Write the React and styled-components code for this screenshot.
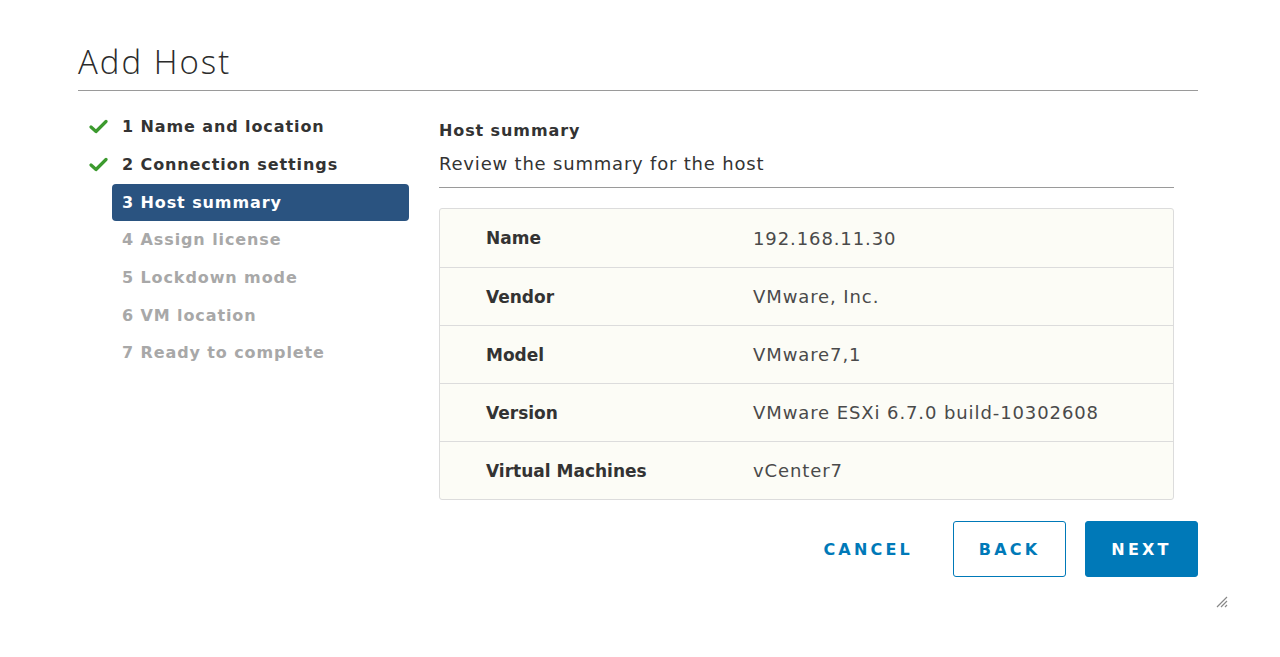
import React from "react";
import styled, { createGlobalStyle } from "styled-components";

const Global = createGlobalStyle`
    html, body {
        margin: 0;
        padding: 0;
        background: #ffffff;
    }
    body {
        font-family: "DejaVu Sans", "Open Sans", sans-serif;
        color: #313131;
    }
`;

const Dialog = styled.div`
    position: relative;
    width: 1280px;
    height: 657px;
    box-sizing: border-box;
    padding: 40px 82px 0 78px;
`;

const Title = styled.h1`
    margin: 0;
    font-family: "Open Sans", sans-serif;
    font-size: 33px;
    font-weight: 300;
    letter-spacing: 2px;
    line-height: 44px;
    color: #2b2b2b;
    padding-bottom: 6px;
    border-bottom: 1px solid #9a9a9a;
`;

const Body = styled.div`
    display: flex;
    margin-top: 17px;
`;

const Steps = styled.ul`
    list-style: none;
    margin: 0;
    padding: 0;
    width: 361px;
    flex-shrink: 0;
`;

const StepRow = styled.li`
    display: flex;
    align-items: center;
    height: 37.7px;
`;

const CheckSlot = styled.span`
    width: 34px;
    display: flex;
    align-items: center;
    padding-left: 11px;
    box-sizing: border-box;
`;

const StepLabel = styled.span`
    width: 297px;
    height: 37px;
    box-sizing: border-box;
    padding-left: 10px;
    display: flex;
    align-items: center;
    border-radius: 4px;
    font-size: 16px;
    font-weight: 700;
    letter-spacing: 0.9px;
    color: ${p => p.state === "active" ? "#ffffff" : p.state === "todo" ? "#a8a8a8" : "#333333"};
    background: ${p => p.state === "active" ? "#2a5380" : "transparent"};
`;

const Main = styled.div`
    flex: 1;
    display: flex;
    flex-direction: column;
    padding-top: 12px;
`;

const Content = styled.div`
    margin-right: 24px;
`;

const Heading = styled.div`
    font-size: 16px;
    font-weight: 700;
    letter-spacing: 0.9px;
    line-height: 22px;
    color: #333;
`;

const Sub = styled.div`
    margin-top: 11px;
    font-size: 18px;
    letter-spacing: 0.8px;
    line-height: 22px;
    color: #333;
    padding-bottom: 12px;
    border-bottom: 1px solid #9a9a9a;
`;

const Table = styled.div`
    margin-top: 20px;
    border: 1px solid #dcdcdc;
    border-radius: 3px;
    background: #fcfcf6;
`;

const Row = styled.div`
    display: grid;
    grid-template-columns: 313px 1fr;
    align-items: center;
    height: 58px;
    border-top: ${p => p.first ? "none" : "1px solid #dcdcdc"};
    box-sizing: border-box;
`;

const Key = styled.span`
    padding-left: 46px;
    font-size: 17px;
    font-weight: 600;
    color: #333;
`;

const Val = styled.span`
    font-size: 18px;
    letter-spacing: 0.9px;
    color: #4a4a4a;
`;

const Actions = styled.div`
    display: flex;
    justify-content: flex-end;
    align-items: center;
    gap: 19px;
    margin-top: 21px;
`;

const Button = styled.button`
    height: 56px;
    min-width: ${p => p.variant === "flat" ? "0" : "113px"};
    padding: 0 ${p => p.variant === "flat" ? "20px" : "12px"};
    box-sizing: border-box;
    border-radius: 3px;
    font-family: inherit;
    font-size: 16px;
    font-weight: 600;
    letter-spacing: 3.2px;
    cursor: pointer;
    border: 1px solid ${p => p.variant === "flat" ? "transparent" : "#0079b8"};
    background: ${p => p.variant === "primary" ? "#0079b8" : "transparent"};
    color: ${p => p.variant === "primary" ? "#ffffff" : "#0079b8"};
`;

const Grip = styled.svg`
    position: absolute;
    right: 52px;
    bottom: 49px;
`;

const steps = [
    { label: "1 Name and location", state: "done" },
    { label: "2 Connection settings", state: "done" },
    { label: "3 Host summary", state: "active" },
    { label: "4 Assign license", state: "todo" },
    { label: "5 Lockdown mode", state: "todo" },
    { label: "6 VM location", state: "todo" },
    { label: "7 Ready to complete", state: "todo" },
];

const rows = [
    ["Name", "192.168.11.30"],
    ["Vendor", "VMware, Inc."],
    ["Model", "VMware7,1"],
    ["Version", "VMware ESXi 6.7.0 build-10302608"],
    ["Virtual Machines", "vCenter7"],
];

const Check = () => (
    <svg width="19" height="15" viewBox="0 0 19 15">
        <path d="M2 8 L7 12.5 L17 2.5" fill="none" stroke="#3c9a2e" strokeWidth="3.2" strokeLinecap="round" strokeLinejoin="round" />
    </svg>
);

const App = () => {
    return (
        <Dialog>
            <Global />
            <Title>Add Host</Title>
            <Body>
                <Steps>
                    {steps.map(s => (
                        <StepRow key={s.label}>
                            <CheckSlot>{s.state === "done" && <Check />}</CheckSlot>
                            <StepLabel state={s.state}>{s.label}</StepLabel>
                        </StepRow>
                    ))}
                </Steps>
                <Main>
                    <Content>
                        <Heading>Host summary</Heading>
                        <Sub>Review the summary for the host</Sub>
                        <Table>
                            {rows.map(([k, v], i) => (
                                <Row key={k} first={i === 0}>
                                    <Key>{k}</Key>
                                    <Val>{v}</Val>
                                </Row>
                            ))}
                        </Table>
                    </Content>
                    <Actions>
                        <Button variant="flat">CANCEL</Button>
                        <Button variant="outline">BACK</Button>
                        <Button variant="primary">NEXT</Button>
                    </Actions>
                </Main>
            </Body>
            <Grip width="14" height="14" viewBox="0 0 14 14">
                <path d="M13 3 L3 13 M13 7 L7 13 M13 11 L11 13" stroke="#888" strokeWidth="1.2" />
            </Grip>
        </Dialog>
    );
};

export default App;
